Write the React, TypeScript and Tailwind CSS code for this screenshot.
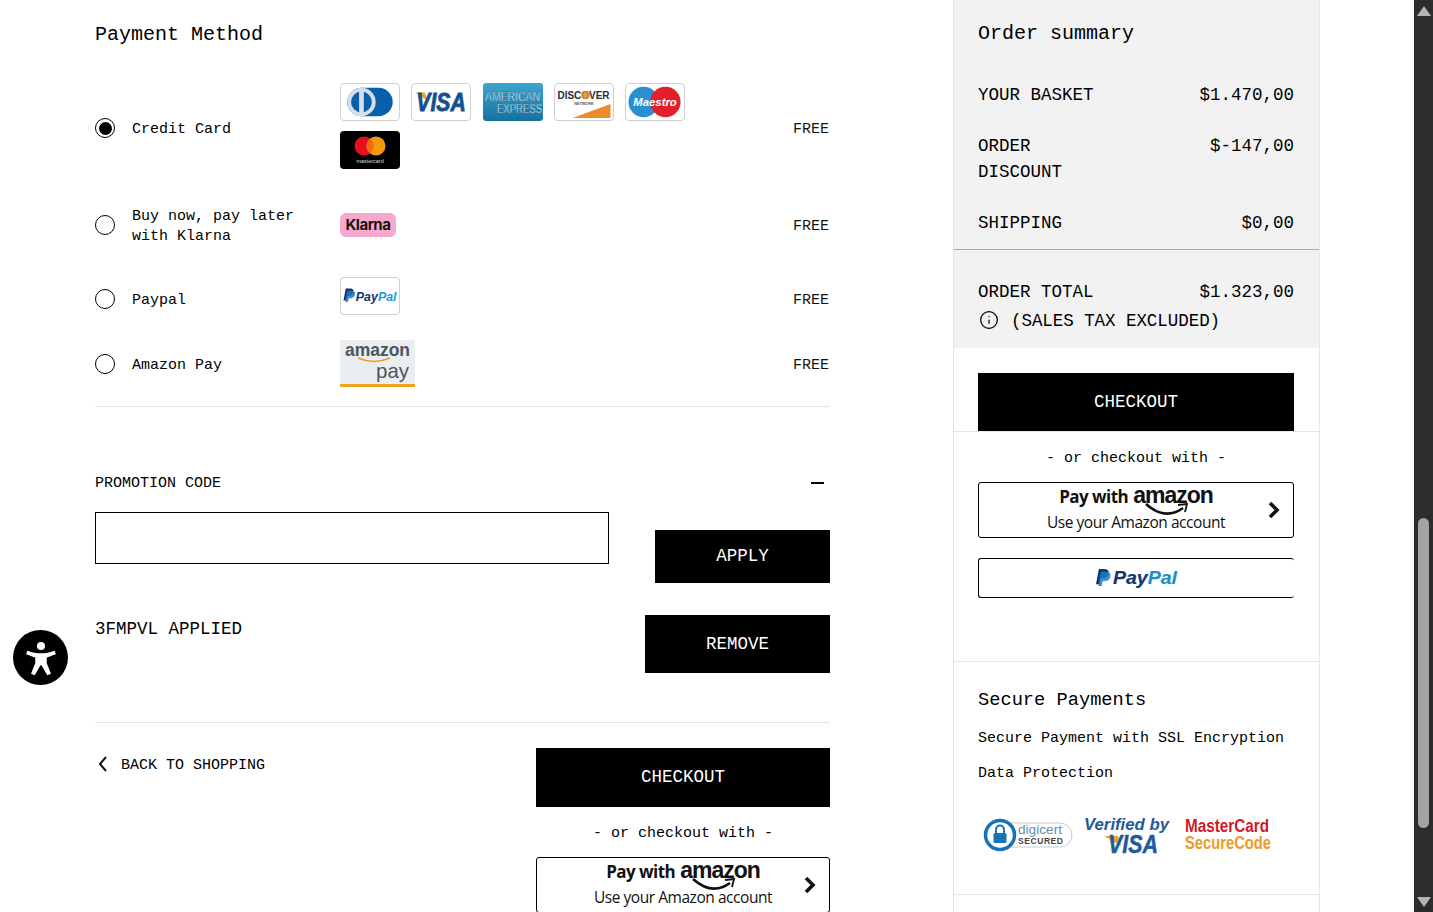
import React from "react"
import { Info } from "lucide-react"

const sans = "Liberation Sans, Arial, sans-serif"

const CardFrame = ({ children, className = "border border-[#cfcfcf] bg-white" }: { children: React.ReactNode, className?: string }) => (
    <div className={`w-[60px] h-[38px] rounded-[4px] overflow-hidden ${className}`}>
        {children}
    </div>
)

const Diners = () => (
    <CardFrame>
        <svg viewBox="0 0 60 38" className="w-full h-full">
            <rect x="6" y="4" width="48" height="30" rx="15" fill="#0a5fa8" />
            <circle cx="21" cy="19" r="15" fill="#d5deea" />
            <circle cx="21" cy="19" r="11" fill="#0a5fa8" />
            <rect x="18.5" y="7" width="5" height="24" fill="#d5deea" />
        </svg>
    </CardFrame>
)

const Visa = () => (
    <CardFrame>
        <svg viewBox="0 0 60 38" className="w-full h-full">
            <path d="M3 9 L13 9 L16 18 Z" fill="#e8a526" />
            <g transform="translate(4 29) scale(1 1.25)">
                <text fontFamily={sans} fontWeight="700" fontStyle="italic" fontSize="21" fill="#15508e" stroke="#15508e" strokeWidth="0.7" textLength="52" lengthAdjust="spacingAndGlyphs">VISA</text>
            </g>
        </svg>
    </CardFrame>
)

const Amex = () => (
    <CardFrame className="bg-[#1f88b8]">
        <svg viewBox="0 0 60 38" className="w-full h-full">
            <defs>
                <linearGradient id="amexBg" x1="0" y1="0" x2="0" y2="1">
                    <stop offset="0" stopColor="#3fa6cf" />
                    <stop offset="1" stopColor="#14719f" />
                </linearGradient>
            </defs>
            <rect width="60" height="38" fill="url(#amexBg)" />
            <g transform="translate(2 18) scale(1 1.2)">
                <text fontFamily={sans} fontSize="10" fill="#e8f4fa" stroke="#0f5c85" strokeWidth="0.25" textLength="55" lengthAdjust="spacingAndGlyphs">AMERICAN</text>
            </g>
            <g transform="translate(14 30) scale(1 1.25)">
                <text fontFamily={sans} fontSize="9.5" fill="#e8f4fa" stroke="#0f5c85" strokeWidth="0.25" textLength="45" lengthAdjust="spacingAndGlyphs">EXPRESS</text>
            </g>
        </svg>
    </CardFrame>
)

const Discover = () => (
    <CardFrame>
        <svg viewBox="0 0 60 38" className="w-full h-full">
            <text x="2" y="16" fontFamily={sans} fontWeight="700" fontSize="12" fill="#2b2b2b" textLength="55" lengthAdjust="spacingAndGlyphs">DISCOVER</text>
            <circle cx="32" cy="11.5" r="4.5" fill="#ec8b2c" opacity="0.85" />
            <text x="30" y="22" textAnchor="middle" fontFamily={sans} fontWeight="700" fontSize="4" fill="#555">NETWORK</text>
            <path d="M18 36 L58 21 L58 36 Z" fill="#ec8b2c" />
        </svg>
    </CardFrame>
)

const Maestro = () => (
    <CardFrame>
        <svg viewBox="0 0 60 38" className="w-full h-full">
            <circle cx="18" cy="19" r="16" fill="#2a8fd0" />
            <circle cx="41" cy="19" r="16" fill="#e2202c" />
            <text x="7" y="23" fontFamily={sans} fontWeight="700" fontStyle="italic" fontSize="12" fill="#fff" textLength="46" lengthAdjust="spacingAndGlyphs">Maestro</text>
        </svg>
    </CardFrame>
)

const Mastercard = () => (
    <CardFrame className="bg-black">
        <svg viewBox="0 0 60 38" className="w-full h-full">
            <circle cx="24" cy="15" r="9.5" fill="#e3101e" />
            <circle cx="36" cy="15" r="9.5" fill="#f59a0d" />
            <path d="M30 7.6 a9.5 9.5 0 0 1 0 14.8 a9.5 9.5 0 0 1 0 -14.8" fill="#f26a12" />
            <text x="30" y="32" textAnchor="middle" fontFamily={sans} fontSize="5.5" fill="#d8d8d8">mastercard</text>
        </svg>
    </CardFrame>
)

const Klarna = () => (
    <div className="w-[56px] h-[24px] rounded-[6px] bg-[#f7a8ce] flex items-center justify-center font-['Inter',sans-serif] font-bold text-[15px] tracking-[-0.5px] text-[#17120f]">
        Klarna
    </div>
)

const PayPalMark = ({ x, y, s }: { x: number, y: number, s: number }) => (
    <g transform={`translate(${x} ${y}) scale(${s})`}>
        <path d="M3 0 H9 C13 0 14 3 13 6 C12 9 9 10 6.5 10 H5 L4 16 H0 Z" fill="#14346f" />
        <path d="M5 3 H11 C15 3 16 6 15 9 C14 12 11 13 8.5 13 H7 L6 18 H2.5 Z" fill="#1b7fc4" opacity="0.85" />
    </g>
)

const PayPalLogo = () => (
    <CardFrame>
        <svg viewBox="0 0 60 38" className="w-full h-full">
            <PayPalMark x={2} y={11} s={0.8} />
            <text x="15" y="24" fontFamily={sans} fontWeight="700" fontStyle="italic" fontSize="13.5" textLength="43" lengthAdjust="spacingAndGlyphs">
                <tspan fill="#14346f">Pay</tspan><tspan fill="#1b9bd6">Pal</tspan>
            </text>
        </svg>
    </CardFrame>
)

const AmazonPay = () => (
    <svg viewBox="0 0 75 47" className="w-[75px] h-[47px]">
        <rect width="75" height="47" fill="#eaeef0" />
        <text x="5" y="16" fontFamily={sans} fontWeight="700" fontSize="18" fill="#4b5661" textLength="65" lengthAdjust="spacingAndGlyphs">amazon</text>
        <path d="M18 18 Q34 25 50 18" stroke="#ec9a1e" strokeWidth="1.6" fill="none" />
        <text x="36" y="38" fontFamily={sans} fontSize="21" fill="#4b5661" textLength="33" lengthAdjust="spacingAndGlyphs">pay</text>
        <rect y="44" width="75" height="3" fill="#eba41f" />
    </svg>
)

const Radio = ({ checked = false }: { checked?: boolean }) => (
    <div className="w-[20px] h-[20px] rounded-full border-[1.5px] border-black flex items-center justify-center shrink-0">
        {checked && <div className="w-[13px] h-[13px] rounded-full bg-black" />}
    </div>
)

const PayRow = ({ checked, label, className = "", children }: { checked?: boolean, label: React.ReactNode, className?: string, children: React.ReactNode }) => (
    <div className={`flex items-center ${className}`}>
        <div className="w-[245px] flex items-center gap-[17px] shrink-0">
            <Radio checked={checked} />
            <div className="text-[15px] leading-5 pt-[2px] -mb-[2px]">{label}</div>
        </div>
        <div className="flex-1">{children}</div>
        <div className="text-[15px] leading-5 pt-[2px] -mb-[2px] pr-px text-[#111]">FREE</div>
    </div>
)

const BlackButton = ({ label, className = "" }: { label: string, className?: string }) => (
    <button className={`bg-black text-white text-[17.5px] flex items-center justify-center ${className}`}>{label}</button>
)

const AmazonButton = () => (
    <div className="relative h-[56px] border border-black rounded-[3px] flex flex-col items-center pt-[2px] font-['Open_Sans',sans-serif] text-[#111] bg-white shrink-0">
        <div className="flex items-baseline gap-[5px] leading-[24px]">
            <span className="text-[17px] font-bold tracking-[-0.55px]">Pay with</span>
            <span className="relative text-[23px] font-bold tracking-[-1px] font-['Liberation_Sans',sans-serif] leading-[20px]">amazon</span>
        </div>
        <svg viewBox="0 0 44 14" className="absolute left-1/2 top-[20px] ml-[9px] w-[44px] h-[14px]">
            <path d="M1 1 Q20 18 38 5" stroke="#111" strokeWidth="2.6" fill="none" />
            <path d="M33 2 L42 1 L40 9" stroke="#111" strokeWidth="1.8" fill="none" />
        </svg>
        <div className="text-[15.5px] font-medium tracking-[-0.45px] leading-[22px] mt-[2px]">Use your Amazon account</div>
        <svg viewBox="0 0 12 18" className="absolute right-[13px] top-[18px] w-[12px] h-[18px]">
            <path d="M2 2 L9 9 L2 16" stroke="#111" strokeWidth="3.6" fill="none" />
        </svg>
    </div>
)

const PayPalButton = () => (
    <div className="h-[40px] border border-black border-r-0 rounded-[3px] flex items-center justify-center">
        <svg viewBox="0 0 82 22" className="w-[82px] h-[22px]">
            <PayPalMark x={0} y={2} s={0.95} />
            <text x="17" y="17" fontFamily={sans} fontWeight="700" fontStyle="italic" fontSize="18" stroke="#14346f" strokeWidth="0.2" textLength="64" lengthAdjust="spacingAndGlyphs">
                <tspan fill="#14346f">Pay</tspan><tspan fill="#1b8fcb" stroke="#1b8fcb">Pal</tspan>
            </text>
        </svg>
    </div>
)

const Seals = () => (
    <div className="flex items-center h-[40px] pl-[5px]">
        <svg viewBox="0 0 90 34" className="w-[90px] h-[34px]">
            <rect x="8" y="5" width="81" height="24" rx="12" fill="#fff" stroke="#c9c9c9" />
            <circle cx="17" cy="17" r="14.5" fill="#fff" stroke="#1573b7" strokeWidth="3.5" />
            <rect x="10.5" y="15" width="13" height="10" rx="1.5" fill="#1573b7" />
            <path d="M13 15 V11.5 a4 4 0 0 1 8 0 V15" stroke="#1573b7" strokeWidth="2" fill="none" />
            <text x="35" y="16" fontFamily={sans} fontSize="12.5" fill="#5d8fb5" textLength="44" lengthAdjust="spacingAndGlyphs">digicert</text>
            <text x="35" y="26" fontFamily={sans} fontWeight="700" fontSize="8.5" fill="#444" textLength="45" lengthAdjust="spacing">SECURED</text>
        </svg>
        <svg viewBox="0 0 88 46" className="w-[88px] h-[46px] ml-[11px] -my-[3px]">
            <text x="0" y="18" fontFamily={sans} fontWeight="700" fontStyle="italic" fontSize="17" fill="#1f5a9a" textLength="85" lengthAdjust="spacingAndGlyphs">Verified by</text>
            <path d="M20 24 L34 24 L37 34 Z" fill="#e8a526" />
            <g transform="translate(24 41) scale(1 1.25)">
                <text fontFamily={sans} fontWeight="700" fontStyle="italic" fontSize="20" fill="#1f5a9a" stroke="#1f5a9a" strokeWidth="0.4" textLength="50" lengthAdjust="spacingAndGlyphs">VISA</text>
            </g>
        </svg>
        <svg viewBox="0 0 90 36" className="w-[90px] h-[36px] ml-[12px]">
            <g transform="translate(1 15) scale(1 1.2)">
                <text fontFamily={sans} fontWeight="700" fontSize="15" fill="#cf1a2b" textLength="84" lengthAdjust="spacingAndGlyphs">MasterCard</text>
            </g>
            <g transform="translate(1 32) scale(1 1.2)">
                <text fontFamily={sans} fontWeight="700" fontSize="15" fill="#ee9a24" textLength="86" lengthAdjust="spacingAndGlyphs">SecureCode</text>
            </g>
        </svg>
    </div>
)

const SummaryRow = ({ label, value, className = "" }: { label: React.ReactNode, value: string, className?: string }) => (
    <div className={`flex justify-between items-start text-[17.5px] leading-[26px] pt-px -mb-px ${className}`}>
        <div className="w-[130px]">{label}</div>
        <div>{value}</div>
    </div>
)

const Scrollbar = () => (
    <div className="w-[19px] h-[912px] bg-[#2c2c2c] flex flex-col items-center shrink-0">
        <svg viewBox="0 0 14 10" className="w-[14px] h-[10px] mt-[6px] shrink-0"><path d="M7 0 L14 10 H0 Z" fill="#b5b5b5" /></svg>
        <div className="w-[11px] h-[310px] rounded-[6px] bg-[#a3a3a3] mt-[502px] shrink-0" />
        <svg viewBox="0 0 14 10" className="w-[14px] h-[10px] mt-[69px] shrink-0"><path d="M0 0 H14 L7 10 Z" fill="#b5b5b5" /></svg>
    </div>
)

const App = () => {
    return (
        <div className="relative flex h-[912px] w-[1433px] overflow-hidden bg-white text-black font-['Liberation_Mono',monospace]">
            <div className="flex-1 flex items-start">
                <div className="w-[735px] ml-[95px] pt-[19px]">
                    <h2 className="text-[20px] leading-[28px] pt-[2px] -mb-[2px]">Payment Method</h2>

                    <PayRow checked label="Credit Card" className="mt-[36px]">
                        <div className="flex flex-wrap gap-x-[11.3px] gap-y-[10px] w-[400px] pb-1">
                            <Diners />
                            <Visa />
                            <Amex />
                            <Discover />
                            <Maestro />
                            <Mastercard />
                        </div>
                    </PayRow>
                    <PayRow label={<>Buy now, pay later<br />with Klarna</>} className="mt-[32px]">
                        <Klarna />
                    </PayRow>
                    <PayRow label="Paypal" className="mt-[32px]">
                        <div className="pb-[6px]"><PayPalLogo /></div>
                    </PayRow>
                    <PayRow label="Amazon Pay" className="mt-[19px]">
                        <AmazonPay />
                    </PayRow>
                    <div className="border-t border-[#e3e3e3] mt-[19px]" />

                    <div className="flex justify-between items-center mt-[65px]">
                        <div className="text-[15px] leading-5 pt-[2px] -mb-[2px]">PROMOTION CODE</div>
                        <div className="w-[13px] h-[2px] bg-black mr-[6px] mt-px -mb-px" />
                    </div>
                    <div className="flex justify-between items-start mt-5">
                        <input type="text" className="w-[514px] h-[52px] border border-black outline-none" />
                        <BlackButton label="APPLY" className="w-[175px] h-[53px] mt-[18px]" />
                    </div>
                    <div className="flex justify-between items-start mt-8">
                        <div className="text-[17.5px] leading-[26px] pt-px">3FMPVL APPLIED</div>
                        <BlackButton label="REMOVE" className="w-[185px] h-[58px]" />
                    </div>
                    <div className="border-t border-[#e3e3e3] mt-[49px]" />

                    <div className="flex justify-between items-start mt-[25px]">
                        <div className="flex items-center gap-[13px] ml-[3px] mt-[6px] text-[15px] leading-5">
                            <svg viewBox="0 0 10 16" className="w-[10px] h-[16px]">
                                <path d="M8 1 L2 8 L8 15" stroke="#111" strokeWidth="2" fill="none" />
                            </svg>
                            <span className="pt-[2px] -mb-[2px]">BACK TO SHOPPING</span>
                        </div>
                        <div className="w-[294px] flex flex-col">
                            <BlackButton label="CHECKOUT" className="h-[59px]" />
                            <div className="text-[15px] leading-5 text-center pt-[17px] -mb-[2px]">- or checkout with -</div>
                            <div className="mt-[15px]"><AmazonButton /></div>
                        </div>
                    </div>
                </div>

                <div className="w-[367px] ml-[123px] h-[912px] border-x border-[#e6e6e6] shrink-0">
                    <div className="bg-[#f2f2f2] pt-[18px] pb-[15px]">
                        <div className="pl-6 pr-[25px] pb-[14px]">
                            <h2 className="text-[20px] leading-[28px] pt-[2px] -mb-[2px]">Order summary</h2>
                            <SummaryRow label="YOUR BASKET" value="$1.470,00" className="mt-[35px]" />
                            <SummaryRow label="ORDER DISCOUNT" value="$-147,00" className="mt-[25px]" />
                            <SummaryRow label="SHIPPING" value="$0,00" className="mt-[25px]" />
                        </div>
                        <div className="border-t border-[#a9a9a9] pl-6 pr-[25px] pt-[28px]">
                            <SummaryRow label="ORDER TOTAL" value="$1.323,00" />
                            <div className="flex items-center gap-[12px] text-[17.5px] leading-[26px] mt-[3px]">
                                <Info size={20} strokeWidth={1.5} className="ml-px" />
                                <span className="pt-px -mb-px tracking-[-0.05px]">(SALES TAX EXCLUDED)</span>
                            </div>
                        </div>
                    </div>
                    <div className="pl-6 pr-[25px] pt-[25px]">
                        <BlackButton label="CHECKOUT" className="w-full h-[58px]" />
                    </div>
                    <div className="border-t border-[#e6e6e6] pl-6 pr-[25px] pt-[15px] pb-[63px]">
                        <div className="text-[15px] leading-5 text-center pt-[2px] -mb-[2px]">- or checkout with -</div>
                        <div className="mt-[15px]"><AmazonButton /></div>
                        <div className="mt-5"><PayPalButton /></div>
                    </div>
                    <div className="border-y border-[#e6e6e6] pl-6 pr-[25px] pt-[24px] pb-[39px]">
                        <h3 className="text-[18.7px] leading-[26px] pt-px -mb-px">Secure Payments</h3>
                        <div className="text-[15px] leading-5 mt-[15px] pt-[2px] -mb-[2px]">Secure Payment with SSL Encryption</div>
                        <div className="text-[15px] leading-5 mt-[15px] pt-[2px] -mb-[2px]">Data Protection</div>
                        <div className="mt-[33px]"><Seals /></div>
                    </div>
                </div>
            </div>

            <Scrollbar />

            <div className="absolute left-[13px] top-[630px] w-[55px] h-[55px] rounded-full bg-black flex items-center justify-center">
                <svg viewBox="0 0 40 40" className="w-[42px] h-[42px]">
                    <circle cx="20" cy="8.5" r="3.8" fill="#fff" />
                    <path d="M7 13 C12 15 16 15.5 20 15.5 C24 15.5 28 15 33 13 L34.2 16.5 C30 18 27.5 19 25.5 19.5 L25.5 25 L29.5 35 L26 36.5 L20.5 27 H19.5 L14 36.5 L10.5 35 L14.5 25 L14.5 19.5 C12.5 19 10 18 5.8 16.5 Z" fill="#fff" />
                </svg>
            </div>
        </div>
    )
}

export default App
